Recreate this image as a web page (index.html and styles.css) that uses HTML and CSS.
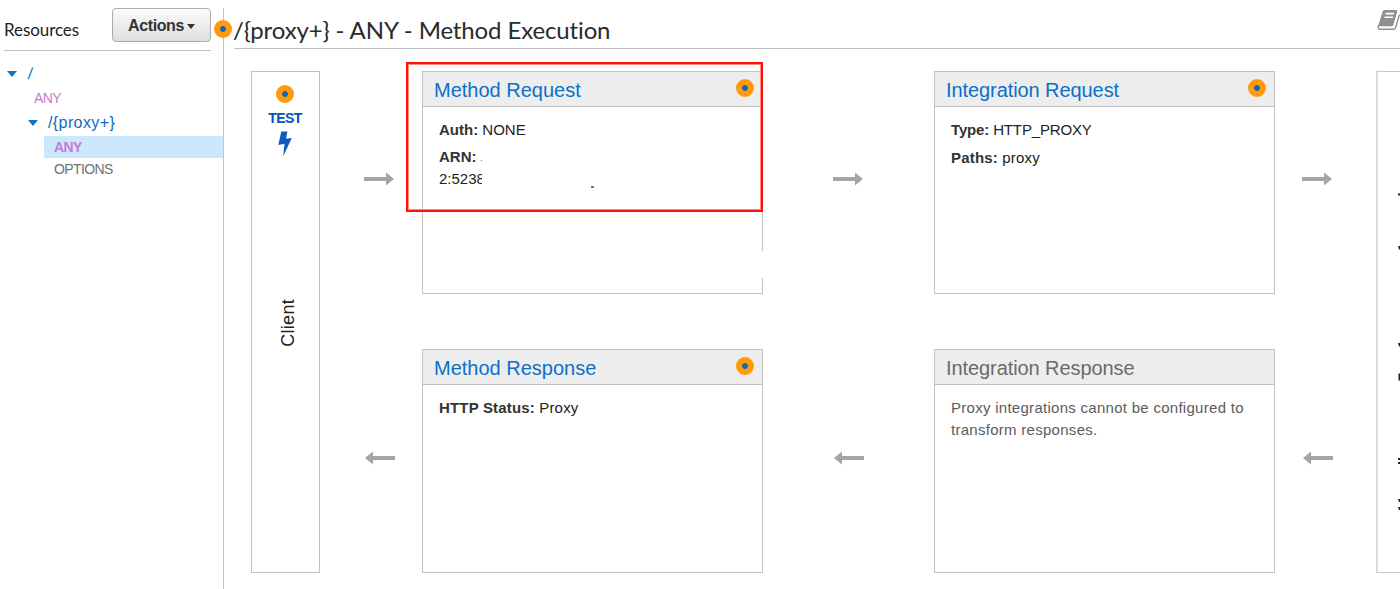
FILE: index.html
```html
<!DOCTYPE html>
<html lang="en">
<head>
<meta charset="utf-8">
<title>Method Execution</title>
<link rel="stylesheet" href="styles.css">
</head>
<body>
<div class="app">
  <aside class="sidebar">
    <header class="sidebar-head">
      <h2 class="sidebar-title">Resources</h2>
      <button class="actions">Actions<span class="caret"></span></button>
    </header>
    <nav class="tree">
      <div class="node root"><span class="twisty"></span><span class="slash">/</span></div>
      <div class="verb verb-root">ANY</div>
      <div class="node child"><span class="twisty"></span><span>/{proxy+}</span></div>
      <div class="verb selected">ANY</div>
      <div class="verb options">OPTIONS</div>
    </nav>
    <span class="dot dot-divider"></span>
  </aside>
  <main class="main">
    <header class="main-head">
      <h1 class="title">/{proxy+} - ANY - Method Execution</h1>
      <svg class="book" width="24" height="22" viewBox="0 0 24 22">
        <path d="M7.500 1h11.600q1.500 0 1.100 1.500l-3.900 13.500q-.4 1.300-1.800 1.300H2.800q-1.600 0-1.200-1.500L5.600 2.500q.5-1.500 1.900-1.500z" fill="#8f8f8f"/>
        <path d="M8.500 4.600h8.500M7.500 8.200h8.500" stroke="#fff" stroke-width="1.600"/>
        <path d="M1.500 16q-.8 4.300 1.800 4.300h13.200q1.500 0 2-1.500L22.500 5.500" fill="none" stroke="#8f8f8f" stroke-width="1.400"/>
      </svg>
    </header>
    <div class="flow">
      <section class="client">
        <span class="dot"></span>
        <a class="test">TEST</a>
        <svg class="bolt" width="14" height="26" viewBox="0 0 14 26"><path d="M3.300 .5h6.200L8 7.800l5.800-.8L5.200 25.300 6.500 12.800.3 14z" fill="#0b5cc4"/></svg>
        <span class="client-label">Client</span>
      </section>
      <div class="lane">
        <svg class="arrow" width="30" height="14" viewBox="0 0 30 14"><path d="M0 5h22V.5L30 7l-8 6.500V9H0z"/></svg>
        <svg class="arrow back" width="30" height="14" viewBox="0 0 30 14"><path d="M30 5H8V.5L0 7l8 6.500V9h22z"/></svg>
      </div>
      <div class="stack">
        <section class="card">
          <header class="card-head">Method Request<span class="dot"></span></header>
          <div class="card-body">
            <p><b>Auth:</b> NONE</p>
            <p class="arn"><b>ARN:</b></p>
            <p class="arn-value">2:5238</p>
          </div>
          <span class="speck speck-a"></span>
          <span class="speck speck-b"></span>
          <span class="mask"></span>
          <span class="gap"></span>
          <span class="highlight"></span>
        </section>
        <section class="card">
          <header class="card-head">Method Response<span class="dot"></span></header>
          <div class="card-body"><p class="status"><b>HTTP Status:</b> Proxy</p></div>
        </section>
      </div>
      <div class="lane wide">
        <svg class="arrow" width="30" height="14" viewBox="0 0 30 14"><path d="M0 5h22V.5L30 7l-8 6.500V9H0z"/></svg>
        <svg class="arrow back" width="30" height="14" viewBox="0 0 30 14"><path d="M30 5H8V.5L0 7l8 6.500V9h22z"/></svg>
      </div>
      <div class="stack">
        <section class="card">
          <header class="card-head integration">Integration Request<span class="dot"></span></header>
          <div class="card-body"><p class="type"><b>Type:</b> HTTP_PROXY</p><p class="paths"><b>Paths:</b> proxy</p></div>
        </section>
        <section class="card disabled">
          <header class="card-head integration">Integration Response</header>
          <div class="card-body"><p>Proxy integrations cannot be configured to transform responses.</p></div>
        </section>
      </div>
      <div class="lane last">
        <svg class="arrow" width="30" height="14" viewBox="0 0 30 14"><path d="M0 5h22V.5L30 7l-8 6.500V9H0z"/></svg>
        <svg class="arrow back" width="30" height="14" viewBox="0 0 30 14"><path d="M30 5H8V.5L0 7l8 6.500V9h22z"/></svg>
      </div>
      <section class="endpoint">
        <svg class="ticks" width="2" height="500" viewBox="0 0 2 500"><path d="M0 121.500h2v2H0zM0 174h2v3.500H1zM0 271h2v3.500H1zM.5 301.500H2v7H.5zM0 386h2v2H0zM0 390h2v2H0zM0 427h2v3H1zM0 435h2v3H1z" fill="#222"/></svg>
      </section>
    </div>
  </main>
</div>
</body>
</html>
```
FILE: styles.css
```css
* { box-sizing: border-box; }
body {
  margin: 0;
  background: #fff;
  color: #222;
  font: 15px/22px "Liberation Sans", Arial, sans-serif;
  overflow: hidden;
}
.app { display: flex; height: 589px; padding-top: 8px; }

.sidebar { position: relative; flex: none; width: 224px; border-right: 1px solid #c4c4c4; }
.sidebar-head {
  display: flex;
  justify-content: space-between;
  height: 43px;
  margin: 0 12px 0 4px;
  border-bottom: 1px solid #bfbfbf;
}
.sidebar-title { margin: 11px 0 0; font: 400 17px/22px Lato, sans-serif; letter-spacing: -.08px; }
.actions {
  display: flex;
  align-items: center;
  justify-content: center;
  width: 99px;
  height: 34px;
  padding: 1px 0 0;
  border: 1px solid #acacac;
  border-radius: 4px;
  background: linear-gradient(#fbfbfb, #dedede);
  color: #333;
  font: 700 16px/20px "Liberation Sans", Arial, sans-serif;
  letter-spacing: -.4px;
}
.caret { margin: 1px 0 0 3px; border: 4px solid transparent; border-top: 5px solid #333; border-bottom: 0; }

.tree { padding-top: 12px; }
.node { display: flex; align-items: center; height: 22px; color: #0b6cbf; font-size: 16px; letter-spacing: .4px; }
.slash { transform: skewX(-6deg); }
.root { padding-left: 7px; gap: 11px; }
.child { padding-left: 28px; gap: 10px; margin-top: 3px; }
.twisty { border: 5px solid transparent; border-top: 6px solid #0b76c9; border-bottom: 0; }
.verb { height: 22px; color: #c878d2; font-size: 14px; line-height: 22px; letter-spacing: -.6px; }
.verb-root { margin-top: 2px; padding-left: 34px; }
.selected { margin: 2px 0 0 44px; padding-left: 10px; background: #cce8ff; font-weight: 700; }
.options { padding-left: 54px; color: #707070; }

.dot {
  display: block;
  width: 18px;
  height: 18px;
  border-radius: 50%;
  background: radial-gradient(circle, #1464c0 2.500px, #ff9a08 3.300px);
}
.dot-divider { position: absolute; right: -9px; top: 12px; }

.main { flex: 1; min-width: 0; padding-left: 10px; }
.main-head {
  display: flex;
  justify-content: space-between;
  height: 41px;
  border-bottom: 1px solid #bfbfbf;
}
.title { margin: 6px 0 0 -1px; color: #2a2a2a; font: 400 24px/32px Lato, sans-serif; letter-spacing: -.13px; white-space: nowrap; }
.book { flex: none; margin: 1px -1px 0 0; }

.flow { display: flex; height: 502px; margin: 22px 0 0 17px; overflow: visible; }
.client {
  display: flex;
  flex: none;
  flex-direction: column;
  align-items: center;
  width: 69px;
  border: 1px solid #c2c2c2;
  padding: 13px 1px 0 0;
}
.test { margin-top: 4px; color: #0053ba; font-size: 14px; font-weight: 700; line-height: 22px; letter-spacing: -.6px; }
.bolt { margin-top: 2px; }
.client-label { margin: 142px 0 0 5px; font-size: 18px; line-height: 22px; letter-spacing: .3px; writing-mode: vertical-rl; transform: rotate(180deg); }

.lane { flex: none; width: 102px; padding: 101px 0 0 44px; }
.wide { width: 171px; padding-left: 70px; }
.last { width: 101px; padding-left: 27px; }
.arrow { display: block; fill: #a5a5a5; }
.back { margin: 265px 0 0 1px; }

.stack { display: flex; flex: none; flex-direction: column; justify-content: space-between; width: 341px; }
.card { position: relative; height: 224px; border: 1px solid #c2c2c2; }
.card:first-child { height: 223px; }
.card-head {
  display: flex;
  justify-content: space-between;
  height: 35px;
  padding: 0 8px 0 11px;
  border-bottom: 1px solid #c2c2c2;
  background: #ededed;
  color: #0b70c8;
  font-size: 20px;
  line-height: 37px;
}
.integration { letter-spacing: -.08px; }
.card-head .dot { margin-top: 7px; }
.card-body { padding: 12px 16px; }
.card-body p { margin: 0 0 6px; }
.card-body b { color: #333; }
.card-body .arn { margin: -1px 0 0; }
.card-body .arn-value { margin: 0; }
.status { letter-spacing: .17px; }
.type { letter-spacing: -.15px; }
.paths { letter-spacing: .18px; }
.disabled .card-head { color: #6a6a6a; }
.disabled .card-body { color: #5c5c5c; letter-spacing: .28px; }

/* Annotations over the method request card */
.highlight { position: absolute; left: -17px; top: -10px; width: 357px; height: 150px; border: 2px solid #fa1208; box-shadow: inset 0 0 0 1px #ff8a80; }
.speck { position: absolute; background: #777; }
.speck-a { left: 168px; top: 114px; width: 3px; height: 2px; }
.speck-b { left: 58px; top: 88px; width: 1px; height: 1px; }
.mask { position: absolute; left: 59px; top: 98px; width: 60px; height: 22px; background: #fff; }
.gap { position: absolute; right: -1px; top: 179px; width: 1px; height: 27px; background: #fff; }

.endpoint { flex: 1; min-width: 0; border: 1px solid #c6c6c6; border-left: 2px solid #dadada; border-right: 0; }
.ticks { display: block; margin-left: auto; }
```
